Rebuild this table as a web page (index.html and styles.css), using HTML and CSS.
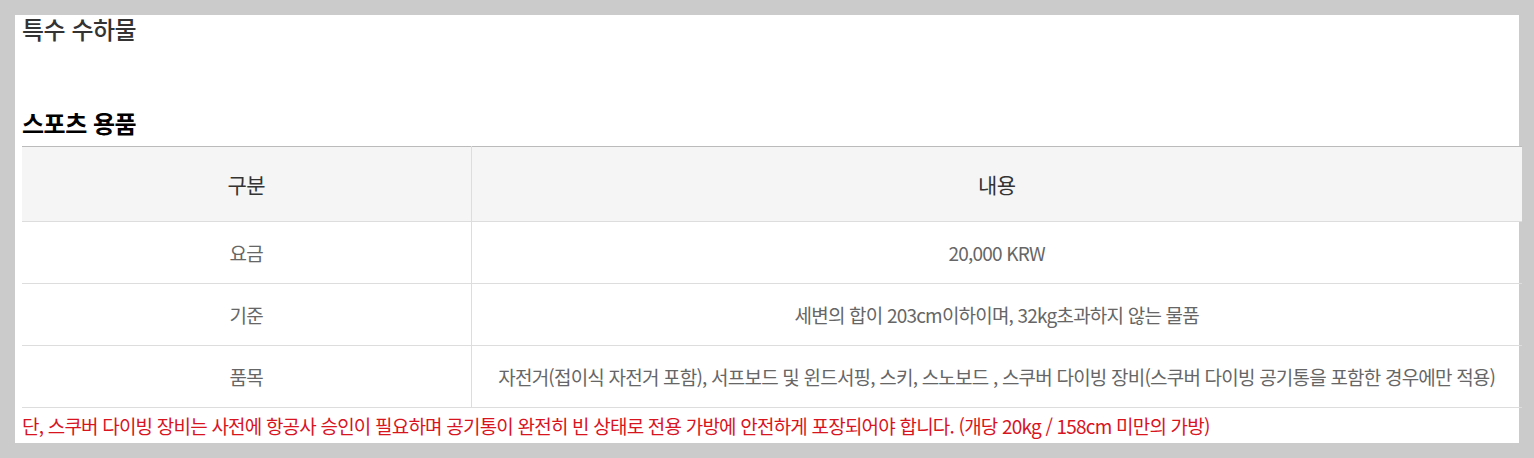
FILE: index.html
```html
<!DOCTYPE html>
<html lang="ko">
<head>
    <meta charset="UTF-8">
    <meta name="viewport" content="width=device-width, initial-scale=1.0">
    <title>특수 수하물</title>
    <link rel="stylesheet" href="styles.css">
</head>
<body>
    <div id="main">
        <h2 class="page-title">특수 수하물</h2>
        <h3 class="sub-title">스포츠 용품</h3>
        <table class="fee-table">
            <colgroup>
                <col class="col-kind">
                <col>
            </colgroup>
            <thead>
                <tr>
                    <th>구분</th>
                    <th>내용</th>
                </tr>
            </thead>
            <tbody>
                <tr>
                    <td>요금</td>
                    <td>20,000 KRW</td>
                </tr>
                <tr>
                    <td>기준</td>
                    <td>세변의 합이 203cm이하이며, 32kg초과하지 않는 물품</td>
                </tr>
                <tr>
                    <td>품목</td>
                    <td>자전거(접이식 자전거 포함), 서프보드 및 윈드서핑, 스키, 스노보드 , 스쿠버 다이빙 장비(스쿠버 다이빙 공기통을 포함한 경우에만 적용)</td>
                </tr>
            </tbody>
        </table>
        <p class="notice">단, 스쿠버 다이빙 장비는 사전에 항공사 승인이 필요하며 공기통이 완전히 빈 상태로 전용 가방에 안전하게 포장되어야 합니다. (개당 20kg / 158cm 미만의 가방)</p>
    </div>
</body>
</html>
```

FILE: styles.css
```css
body
{
    margin: 0;
    background-color: #cbcbcb;
    font-family: "Noto Sans CJK KR", "Noto Sans", sans-serif;
}
#main
{
    margin: 15px;
    height: 428px;
    padding-left: 7px;
    background-color: #fff;
    box-sizing: border-box;
}
.page-title
{
    margin: 0;
    font-size: 24px;
    line-height: 28px;
    font-weight: 500;
    color: #333;
    letter-spacing: -0.5px;
}
.sub-title
{
    margin: 66px 0 0 0;
    font-size: 24px;
    line-height: 28px;
    font-weight: 700;
    color: #000;
    letter-spacing: -0.5px;
    padding-bottom: 9px;
}
.fee-table
{
    width: 1500px;
    border-collapse: collapse;
    border-top: 1px solid #bbb;
    table-layout: fixed;
}
.col-kind
{
    width: 449px;
}
.fee-table th
{
    height: 74px;
    background-color: #f5f5f5;
    font-size: 21px;
    font-weight: 400;
    color: #333;
    border-bottom: 1px solid #ddd;
    border-right: 1px solid #ddd;
    padding: 0;
    letter-spacing: -0.5px;
}
.fee-table td
{
    height: 61px;
    text-align: center;
    font-size: 19px;
    color: #666;
    border-bottom: 1px solid #ddd;
    border-right: 1px solid #ddd;
    padding: 0;
    letter-spacing: -0.8px;
}
.fee-table th:last-child,
.fee-table td:last-child
{
    border-right: none;
}
.notice
{
    margin: 0;
    padding-top: 6px;
    font-size: 19px;
    line-height: 24px;
    color: #d8141f;
    letter-spacing: -0.8px;
}
```
